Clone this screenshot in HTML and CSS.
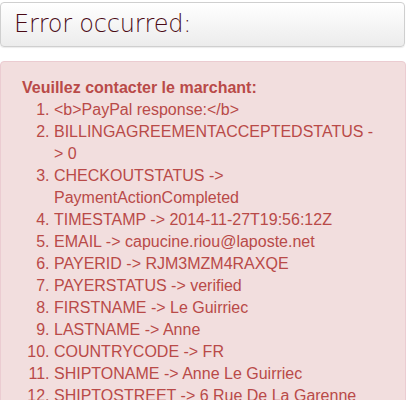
FILE: index.html
```html
<!DOCTYPE html>
<html>
<head>
<meta charset="utf-8">
<link rel="stylesheet" href="styles.css">
</head>
<body>
<div class="page">
  <div class="header"><h1 class="title">Error occurred:</h1></div>
  <div class="alert">
    <div class="alert-title">Veuillez contacter le marchant:</div>
    <ol class="list">
      <li>&lt;b&gt;PayPal response:&lt;/b&gt;</li>
      <li>BILLINGAGREEMENTACCEPTEDSTATUS -&gt; 0</li>
      <li>CHECKOUTSTATUS -&gt; PaymentActionCompleted</li>
      <li>TIMESTAMP -&gt; 2014-11-27T19:56:12Z</li>
      <li>EMAIL -&gt; capucine.riou@laposte.net</li>
      <li>PAYERID -&gt; RJM3MZM4RAXQE</li>
      <li>PAYERSTATUS -&gt; verified</li>
      <li>FIRSTNAME -&gt; Le Guirriec</li>
      <li>LASTNAME -&gt; Anne</li>
      <li>COUNTRYCODE -&gt; FR</li>
      <li>SHIPTONAME -&gt; Anne Le Guirriec</li>
      <li>SHIPTOSTREET -&gt; 6 Rue De La Garenne</li>
      <li>SHIPTOCITY -&gt; Paris</li>
    </ol>
  </div>
</div>
</body>
</html>
```
FILE: styles.css
```css
html, body { margin: 0; padding: 0; background: #fff; }
.page { width: 406px; padding-top: 2px; }
.header {
  height: 45px;
  width: 405px;
  border: 1px solid #cfcfcf;
  border-radius: 4px;
  background: linear-gradient(#ffffff, #ececec);
  box-shadow: 0 1px 1px rgba(0,0,0,0.08);
  display: flex;
  align-items: center;
  padding-left: 13px;
  padding-bottom: 2px;
  box-sizing: border-box;
}
.title {
  margin: 0;
  font-family: "DejaVu Sans", sans-serif;
  font-weight: 200;
  font-size: 24px;
  color: #4a0a15;
  letter-spacing: -0.2px;
}
.alert {
  margin-top: 14px;
  background: #f2dede;
  border: 1px solid #ebccd1;
  border-radius: 4px;
  padding: 15px 26px 20px 21px;
  color: #b94a48;
  font-family: "Liberation Sans", Arial, sans-serif;
  font-size: 16px;
  line-height: 22px;
  width: 406px;
  box-sizing: border-box;
}
.alert-title { font-weight: bold; }
.list { margin: 0; padding-left: 32px; }
```
